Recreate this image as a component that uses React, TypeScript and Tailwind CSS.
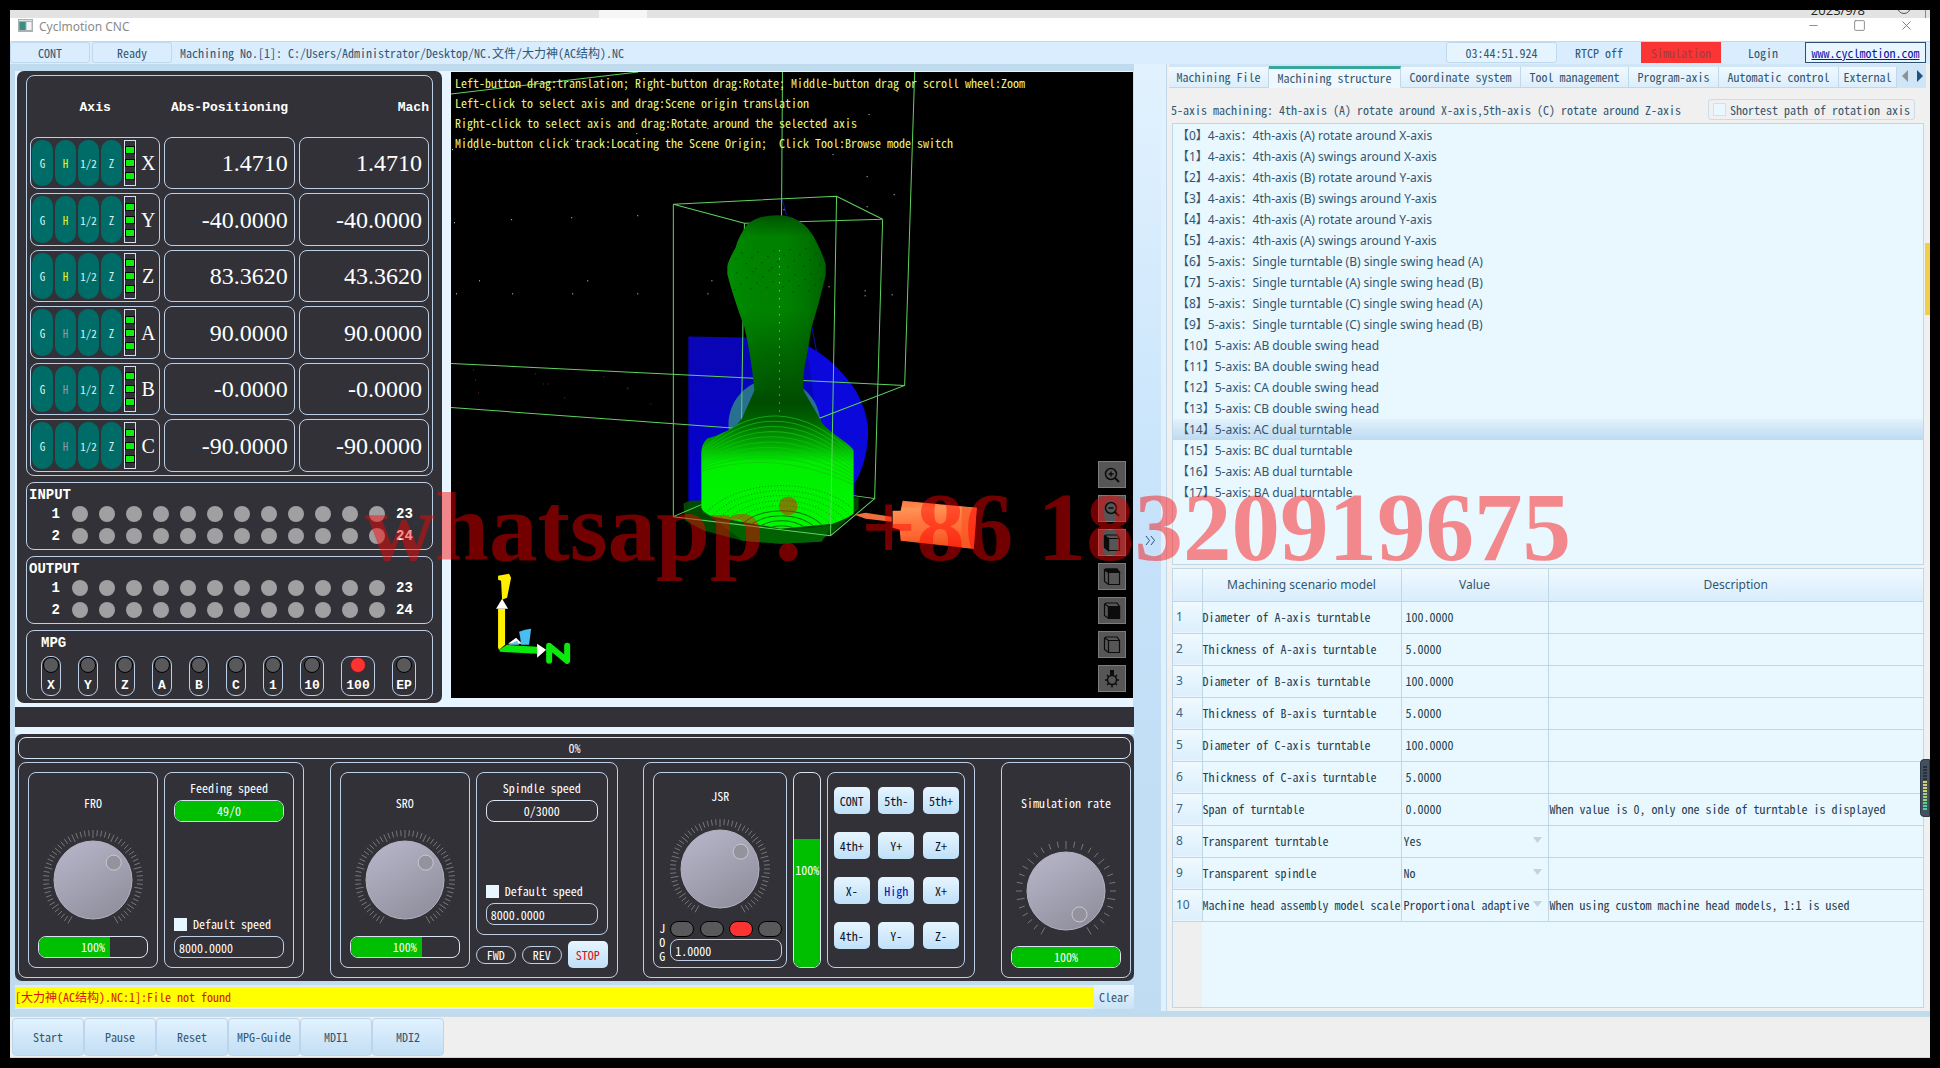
import React from "react";
import { Minus, Square, X } from "lucide-react";

const axes = [
  { name: "X", homed: true, abs: "1.4710", mach: "1.4710" },
  { name: "Y", homed: true, abs: "-40.0000", mach: "-40.0000" },
  { name: "Z", homed: true, abs: "83.3620", mach: "43.3620" },
  { name: "A", homed: false, abs: "90.0000", mach: "90.0000" },
  { name: "B", homed: false, abs: "-0.0000", mach: "-0.0000" },
  { name: "C", homed: false, abs: "-90.0000", mach: "-90.0000" },
];

const structures = [
  "【0】4-axis：4th-axis (A) rotate around X-axis",
  "【1】4-axis：4th-axis (A) swings around X-axis",
  "【2】4-axis：4th-axis (B) rotate around Y-axis",
  "【3】4-axis：4th-axis (B) swings around Y-axis",
  "【4】4-axis：4th-axis (A) rotate around Y-axis",
  "【5】4-axis：4th-axis (A) swings around Y-axis",
  "【6】5-axis：Single turntable (B) single swing head (A)",
  "【7】5-axis：Single turntable (A) single swing head (B)",
  "【8】5-axis：Single turntable (C) single swing head (A)",
  "【9】5-axis：Single turntable (C) single swing head (B)",
  "【10】5-axis: AB double swing head",
  "【11】5-axis: BA double swing head",
  "【12】5-axis: CA double swing head",
  "【13】5-axis: CB double swing head",
  "【14】5-axis: AC dual turntable",
  "【15】5-axis: BC dual turntable",
  "【16】5-axis: AB dual turntable",
  "【17】5-axis: BA dual turntable",
];

const scenario: { name: string; value: string; note?: string; select?: boolean }[] = [
  { name: "Diameter of A-axis turntable", value: "100.0000" },
  { name: "Thickness of A-axis turntable", value: "5.0000" },
  { name: "Diameter of B-axis turntable", value: "100.0000" },
  { name: "Thickness of B-axis turntable", value: "5.0000" },
  { name: "Diameter of C-axis turntable", value: "100.0000" },
  { name: "Thickness of C-axis turntable", value: "5.0000" },
  { name: "Span of turntable", value: "0.0000", note: "When value is 0, only one side of turntable is displayed" },
  { name: "Transparent turntable", value: "Yes", select: true },
  { name: "Transparent spindle", value: "No", select: true },
  { name: "Machine head assembly model scale", value: "Proportional adaptive", select: true, note: "When using custom machine head models, 1:1 is used" },
];

const frame = "rounded-[8px] border border-[#bccfe6]";

function AxisPanel() {
  return (
    <section className={`${frame} flex flex-col gap-1 px-[3px] pb-[3px]`}>
      <div className="grid h-[57px] grid-cols-3 items-end gap-1 pb-[17px] font-['Liberation_Mono',monospace] text-[13px] leading-4 font-bold text-white">
        <span className="text-center">Axis</span>
        <span className="text-center">Abs-Positioning</span>
        <span className="text-right">Mach</span>
      </div>
      {axes.map((a) => (
        <div key={a.name} className="grid h-[52px] grid-cols-3 gap-1 odd:h-[53px]">
          <div className={`${frame} flex items-stretch gap-0.5 px-px py-0.5`}>
            {["G", "H", "1/2", "Z"].map((k) => (
              <button
                key={k}
                className={`w-[21px] rounded-[10px] bg-[#006c67] text-center text-[11px] ${
                  k === "H" ? (a.homed ? "text-[#e6f21e]" : "text-[#8d9b9e]") : "text-[#d5f3f3]"
                }`}
              >
                {k}
              </button>
            ))}
            <div className="flex w-3 flex-col items-center justify-center gap-[5px] border border-[#d4e0ee]">
              <i className="h-2 w-2.5 border border-black bg-[#0df00d]" />
              <i className="h-2 w-2.5 border border-black bg-[#0df00d]" />
              <i className="h-2 w-2.5 border border-black bg-[#0df00d]" />
            </div>
            <span className="flex flex-1 items-center justify-center font-['Liberation_Serif',serif] text-[20px] text-white">{a.name}</span>
          </div>
          <output className={`${frame} flex items-center justify-end pr-1.5 font-['Liberation_Serif',serif] text-[24px] text-white`}>{a.abs}</output>
          <output className={`${frame} flex items-center justify-end pr-1.5 font-['Liberation_Serif',serif] text-[24px] text-white`}>{a.mach}</output>
        </div>
      ))}
    </section>
  );
}

function IoPanel({ title }: { title: string }) {
  return (
    <section className={`${frame} h-[68px] px-0.5 pt-1 font-['Liberation_Mono',monospace] text-[14px] font-bold text-white`}>
      <h2 className="leading-4">{title}</h2>
      {[
        ["1", "23"],
        ["2", "24"],
      ].map(([from, to]) => (
        <div key={from} className="flex h-[22px] items-center">
          <span className="w-[43px] pr-3 text-right">{from}</span>
          <div className="flex gap-[11px]">
            {Array.from({ length: 12 }, (_, i) => (
              <i key={i} className="size-4 rounded-full bg-[#a09fa2]" />
            ))}
          </div>
          <span className="pl-[11px]">{to}</span>
        </div>
      ))}
    </section>
  );
}

function MpgPanel() {
  return (
    <fieldset className={`${frame} h-[70px] px-3.5 pt-1 font-['Liberation_Mono',monospace] text-[13px] font-bold text-white`}>
      <h2 className="text-[14px] leading-4">MPG</h2>
      <div className="mt-[5px] flex gap-[17px]">
        {["X", "Y", "Z", "A", "B", "C", "1", "10", "100", "EP"].map((k) => (
          <label
            key={k}
            className={`flex h-10 flex-col items-center justify-between rounded-[9px] border border-[#bccfe6] leading-[18px] ${
              k === "100" ? "w-[34px]" : k.length === 2 ? "w-6" : "w-5"
            }`}
          >
            <input
              type="radio"
              name="mpg"
              defaultChecked={k === "100"}
              className="size-4 shrink-0 appearance-none rounded-full border border-black bg-[#59595b] checked:border-[#6b1d1d] checked:bg-[#fb3432]"
            />
            {k}
          </label>
        ))}
      </div>
    </fieldset>
  );
}

const viewTools = ["Zoom in", "Zoom out", "Side view", "Top view", "Front view", "Wire view", "Light"];

function ToolIcon({ name }: { name: string }) {
  if (name === "Zoom in" || name === "Zoom out")
    return (
      <svg width="16" height="16" viewBox="0 0 16 16" fill="none" stroke="currentColor">
        <circle cx="7" cy="7" r="5.500" strokeWidth="1.500" />
        <path d="M11 11l4 4" strokeWidth="2" />
        <path d={name === "Zoom in" ? "M4.500 7h5M7 4.500v5" : "M4.500 7h5"} strokeWidth="1.500" />
      </svg>
    );
  if (name === "Light")
    return (
      <svg width="18" height="18" viewBox="0 0 18 18" fill="none" stroke="currentColor">
        <circle cx="9" cy="10" r="4.500" strokeWidth="1.500" />
        <path d="M7 0h4v5H7z" fill="currentColor" stroke="none" />
        <path d="M9 15v2.500M2 10h2M14 10h2M4 5l1.500 1.500M14 5l-1.500 1.500M4 15l1.500-1.500M14 15l-1.500-1.500" strokeWidth="1.500" />
      </svg>
    );
  return (
    <svg width="18" height="18" viewBox="0 0 18 18" fill="none" stroke="currentColor" strokeWidth="1.200">
      <path d="M1.500 2.500L3 1h11l2.500 3.500v12h-11l-4-3z" />
      <path d="M1.500 2l4 2.500h11M5.500 4.500v12" />
      {name === "Side view" && <path d="M1.500 2l4 2.500v12l-4-3z" fill="currentColor" />}
      {name === "Top view" && <path d="M1.500 1.500L3 1h11l2.500 3.500h-11z" fill="currentColor" />}
      {name === "Front view" && <path d="M5.500 4.500h11v12h-11z" fill="currentColor" />}
    </svg>
  );
}

function Scene() {
  const stars = [
    [3, 150], [60, 147], [120, 145], [186, 143], [28, 208], [136, 208], [260, 208], [5, 221], [61, 221], [121, 221],
    [186, 221], [256, 221], [417, 42], [415, 104], [442, 122], [415, 134], [377, 214], [413, 218], [413, 223], [440, 222],
    [185, 61], [120, 67], [1, 77], [24, 77], [256, 56], [381, 82], [445, 19], [332, 137],
  ];
  const embers = [[22, 297], [84, 301], [152, 304], [24, 307], [96, 311], [176, 315], [27, 320], [92, 311], [176, 316], [113, 325], [199, 331]];
  return (
    <svg className="absolute inset-0 h-full w-full" viewBox="0 0 681 626" preserveAspectRatio="xMinYMin slice" aria-label="Machining scene">
      <defs>
        <linearGradient id="body" x1="0" y1="143" x2="0" y2="456" gradientUnits="userSpaceOnUse">
          <stop offset="0" stopColor="#005200" />
          <stop offset="0.070" stopColor="#008200" />
          <stop offset="0.300" stopColor="#008400" />
          <stop offset="0.420" stopColor="#006b00" />
          <stop offset="0.600" stopColor="#004c00" />
          <stop offset="0.660" stopColor="#006400" />
          <stop offset="0.740" stopColor="#00b400" />
          <stop offset="0.790" stopColor="#00f000" />
          <stop offset="1" stopColor="#00f600" />
        </linearGradient>
        <linearGradient id="shade" x1="276" x2="374" y1="0" y2="0" gradientUnits="userSpaceOnUse">
          <stop offset="0" stopColor="#00a000" stopOpacity="0.350" />
          <stop offset="0.500" stopColor="#007000" stopOpacity="0" />
          <stop offset="1" stopColor="#003800" stopOpacity="0.450" />
        </linearGradient>
        <linearGradient id="blue" x1="0" y1="264" x2="1" y2="425" gradientUnits="userSpaceOnUse">
          <stop offset="0" stopColor="#0a05b4" />
          <stop offset="1" stopColor="#0500d0" />
        </linearGradient>
        <linearGradient id="holder" x1="0" y1="0" x2="0.100" y2="1">
          <stop offset="0" stopColor="#ff7038" />
          <stop offset="0.200" stopColor="#ff9255" />
          <stop offset="0.450" stopColor="#ff7a40" />
          <stop offset="0.700" stopColor="#ff6a34" />
          <stop offset="1" stopColor="#f0501c" />
        </linearGradient>
        <clipPath id="stock">
          <path d="M303 318L291 345Q284 356 272 360Q264 364 256 366Q250 371 250 381V435Q252 441 262 444L329 456L381 451Q395 446 402 441V378Q400 374 390 367Q376 357 371 351L352 318Z" />
        </clipPath>
      </defs>

      <path d="M249 423L232 431L234 448L253 458L291 468L329 471L364 469L379 462L407 436V425Z" fill="#004a00" />
      <path d="M262 446L329 458L381 453L370 469L329 471L291 468Z" fill="#006200" />
      <path d="M237 264L293 265L351 271Q380 283 404 318Q419 345 416 368Q414 392 403 411V425L237 428Z" fill="url(#blue)" />
      <path d="M355 273Q384 288 404 318Q419 345 416 368Q414 392 403 411L370 380Z" fill="#0b08dc" />
      <circle cx="323" cy="352" r="46" fill="#27708f" />
      <path d="M331 128L335 143M360 253L365 279" stroke="#0c0cb0" fill="none" />

      <g stroke="#5fd35f" fill="none">
        <path d="M0 22L187 0M331 0L330 150M463 0L453 313L362 348" />
        <path d="M0 291L453 313M0 335L288 356" />
        <path d="M222 132L385 124L431 147L293 151ZM222 132V444M293 151L290 356" />
      </g>

      <path d="M326 143Q306 143 296 152Q287 164 284 176Q277 188 276 194V202Q281 222 293 255Q300 285 303 318L291 345Q284 356 272 360Q264 364 256 366Q250 371 250 381V435Q252 441 262 444L329 456L381 451Q395 446 402 441V378Q400 374 390 367Q376 357 371 351L352 318Q351 300 355 285L360 255L367 231L374 203V192Q371 182 366 172Q358 154 346 148Q338 143 326 143Z" fill="url(#body)" />
      <path d="M326 143Q306 143 296 152Q287 164 284 176Q277 188 276 194V202Q281 222 293 255Q300 285 303 318L352 318Q351 300 355 285L360 255L367 231L374 203V192Q371 182 366 172Q358 154 346 148Q338 143 326 143Z" fill="url(#shade)" />
      <g clipPath="url(#stock)" fill="none">
        {Array.from({ length: 10 }, (_, i) => (
          <path key={i} d={`M246 ${382 + i * 2}Q326 ${302 + i * 8} 408 ${388 + i * 3}`} stroke="#12c412" strokeWidth="1" opacity="0.700" />
        ))}
        {Array.from({ length: 10 }, (_, i) => (
          <ellipse
            key={i}
            cx="330"
            cy="466"
            rx={14 + i * 8}
            ry={8 + i * 5}
            stroke="#006a00"
            strokeWidth="1"
            strokeDasharray={i > 4 ? "1 2" : "none"}
            opacity={i > 4 ? "0.600" : "0.900"}
          />
        ))}
      </g>
      <path d="M328 178V345" stroke="#9be09b" strokeDasharray="1 7" />
      {Array.from({ length: 44 }, (_, i) => (
        <rect key={i} x={280 + ((i * 37) % 90)} y={175 + ((i * 23) % 45)} width="1" height="1" fill="#003200" />
      ))}

      <g stroke="#5fd35f" fill="none">
        <path d="M385 124L379 463M431 147L423 426M222 444L379 463L423 426L402 423M222 444L250 432" />
      </g>

      <path d="M403 442L414 440L440 444V449L414 446Z" fill="#f0703c" />
      <path d="M441 438H449L451 428L525 435L522 476L449 468L448 457L441 455Z" fill="url(#holder)" />
      <path d="M510 434L525 435L522 476L510 475Z" fill="#f85a26" opacity="0.700" />

      {stars.map(([x, y], i) => (
        <rect key={i} x={x} y={y} width="1" height="1" fill="#d8d8d8" />
      ))}
      {embers.map(([x, y], i) => (
        <rect key={i} x={x} y={y} width="1" height="1" fill="#8a2020" />
      ))}

      <path d="M47 536H54V572L48 577L47 575Z" fill="#fff200" />
      <path d="M51 526L57 536H45Z" fill="#fff" />
      <path d="M47 503L58 501L60 505L56 525L51 527L50 508L47 507Z" fill="#ffee00" />
      <path d="M48 577L56 572L86 574V581L49 579Z" fill="#0be80b" />
      <path d="M86 571L95 577L86 585Z" fill="#fff" />
      <path d="M98 588V573L116 588V573" stroke="#0be80b" strokeWidth="6" strokeLinecap="round" strokeLinejoin="round" fill="none" />
      <path d="M57 571L65 565L71 571Z" fill="#fff" />
      <path d="M68 559L74 557L80 556L78 572H70L69 564Z" fill="#47bdf2" />
      <path d="M57 572L66 568L68 572Z" fill="#6fc4ea" />
    </svg>
  );
}

function Viewport() {
  return (
    <div className="relative flex-1 overflow-hidden bg-black">
      <Scene />
      <div className="relative px-1 pt-px text-[12px] leading-5 whitespace-pre text-[#eef27c]">
        <p>Left-button drag:translation; Right-button drag:Rotate; Middle-button drag or scroll wheel:Zoom</p>
        <p>Left-click to select axis and drag:Scene origin translation</p>
        <p>Right-click to select axis and drag:Rotate around the selected axis</p>
        <p>Middle-button click track:Locating the Scene Origin;  Click Tool:Browse mode switch</p>
      </div>
      <div className="absolute right-[7px] bottom-1.5 flex flex-col gap-[7px]">
        {viewTools.map((t) => (
          <button key={t} aria-label={t} className="flex h-[27px] w-7 items-center justify-center border border-[#7c7c7c] bg-[#565656] text-[#0c0c0c]">
            <ToolIcon name={t} />
          </button>
        ))}
      </div>
    </div>
  );
}

function Dial({ label, angle, ticks }: { label: string; angle: number; ticks: number }) {
  const knobX = 52 + 27 * Math.sin((angle * Math.PI) / 180);
  const knobY = 52 - 27 * Math.cos((angle * Math.PI) / 180);
  return (
    <div className="relative mx-auto size-[104px]">
      <svg viewBox="0 0 104 104" className="size-full" aria-hidden="true">
        <defs>
          <linearGradient id={`dial-${label}`} x1="0" y1="0" x2="0.600" y2="1">
            <stop offset="0" stopColor="#b9b8cb" />
            <stop offset="0.550" stopColor="#a4a3b4" />
            <stop offset="1" stopColor="#92919f" />
          </linearGradient>
        </defs>
        {Array.from({ length: ticks + 1 }, (_, i) => {
          const a = ((-150 + (300 * i) / ticks) * Math.PI) / 180;
          const inner = i % 5 === 0 ? 42 : 44;
          return (
            <line
              key={i}
              x1={52 + inner * Math.sin(a)}
              y1={52 - inner * Math.cos(a)}
              x2={52 + 50 * Math.sin(a)}
              y2={52 - 50 * Math.cos(a)}
              stroke="#77777a"
              strokeWidth="1"
            />
          );
        })}
        <circle cx="52" cy="52" r="39" fill={`url(#dial-${label})`} stroke="#b4b3c0" strokeWidth="1" />
        <circle cx={knobX} cy={knobY} r="7.500" fill="#93929d" stroke="#c9c8d4" strokeWidth="1" />
      </svg>
      <input type="range" aria-label={label} className="absolute inset-0 size-full opacity-0" />
    </div>
  );
}

function Meter({ text, percent }: { text: string; percent: number }) {
  return (
    <div className="relative h-[22px] overflow-hidden rounded-[8px] border border-[#d9e4f2] leading-5 text-white">
      <div className="absolute inset-y-0 left-0 bg-[#00be00]" style={{ width: `${percent}%` }} />
      <span className="relative block text-center">{text}</span>
    </div>
  );
}

function NumberBox({ value, label }: { value: string; label: string }) {
  return <input aria-label={label} defaultValue={value} className="block h-[22px] w-full rounded-[8px] border border-[#bccfe6] bg-transparent px-1 text-white" />;
}

function DefaultSpeed() {
  return (
    <label className="mb-1 flex items-center gap-1.5">
      <input type="checkbox" className="size-[13px] appearance-none bg-[#e8f6ff]" />
      Default speed
    </label>
  );
}

const keyFace = "rounded-[5px] bg-linear-to-b from-[#e6f5ff] to-[#bfe0f8]";

function ControlPanel() {
  return (
    <section className="rounded-[7px] bg-[#323137] p-[3px] text-white">
      <div className="flex h-[22px] items-center justify-center rounded-[8px] border border-[#d9e4f2]" role="progressbar" aria-label="Program progress">
        0%
      </div>
      <div className="mt-[3px] flex h-[216px] justify-between">
        <div className={`${frame} flex w-[286px] gap-1.5 p-[9px]`}>
          <div className={`${frame} flex flex-1 flex-col px-[9px] pt-[22px] pb-[9px]`}>
            <h3 className="text-center leading-4">FRO</h3>
            <div className="mt-[17px]">
              <Dial label="FRO" angle={50} ticks={60} />
            </div>
            <div className="mt-auto">
              <Meter text="100%" percent={66} />
            </div>
          </div>
          <div className={`${frame} flex flex-1 flex-col px-[9px] pt-[7px] pb-[9px]`}>
            <h3 className="mb-1 text-center leading-4">Feeding speed</h3>
            <Meter text="49/0" percent={100} />
            <div className="mt-auto">
              <DefaultSpeed />
              <NumberBox value="8000.0000" label="Feeding speed value" />
            </div>
          </div>
        </div>

        <div className={`${frame} flex w-[288px] gap-1.5 p-[9px]`}>
          <div className={`${frame} flex w-[130px] flex-col px-[9px] pt-[22px] pb-[9px]`}>
            <h3 className="text-center leading-4">SRO</h3>
            <div className="mt-[17px]">
              <Dial label="SRO" angle={50} ticks={60} />
            </div>
            <div className="mt-auto">
              <Meter text="100%" percent={66} />
            </div>
          </div>
          <div className="flex flex-1 flex-col gap-1.5">
            <div className={`${frame} flex flex-1 flex-col px-[9px] pt-[7px] pb-[9px]`}>
              <h3 className="mb-1 text-center leading-4">Spindle speed</h3>
              <Meter text="0/3000" percent={0} />
              <div className="mt-auto">
                <DefaultSpeed />
                <NumberBox value="8000.0000" label="Spindle speed value" />
              </div>
            </div>
            <div className="flex items-center justify-between">
              <button className="h-[18px] w-10 rounded-full border border-[#bccfe6] leading-none">FWD</button>
              <button className="h-[18px] w-10 rounded-full border border-[#bccfe6] leading-none">REV</button>
              <button className={`${keyFace} h-[27px] w-10 text-[#e01010]`}>STOP</button>
            </div>
          </div>
        </div>

        <div className={`${frame} flex w-[332px] gap-1.5 p-[9px]`}>
          <div className={`${frame} flex w-[134px] flex-col px-1 pt-[15px] pb-1`}>
            <h3 className="text-center leading-4">JSR</h3>
            <div className="mt-[13px]">
              <Dial label="JSR" angle={50} ticks={60} />
            </div>
            <div className="mt-auto flex gap-1">
              <div className="flex w-2 flex-col items-center leading-[14px]">
                <span>J</span>
                <span>O</span>
                <span>G</span>
              </div>
              <div className="flex flex-1 flex-col gap-0.5">
                <div className="flex justify-between">
                  {[1, 2, 3, 4].map((n) => (
                    <input
                      key={n}
                      type="radio"
                      name="jog"
                      aria-label={`Jog step ${n}`}
                      defaultChecked={n === 3}
                      className="h-4 w-6 appearance-none rounded-full border border-black bg-[#59595b] checked:bg-[#fb3432]"
                    />
                  ))}
                </div>
                <NumberBox value="1.0000" label="Jog distance" />
              </div>
            </div>
          </div>
          <div className="relative flex w-7 items-center justify-center overflow-hidden rounded-[8px] border border-[#d9e4f2]">
            <div className="absolute inset-x-0 bottom-0 h-[66%] bg-[#00be00]" />
            <span className="relative">100%</span>
          </div>
          <div className={`${frame} grid flex-1 grid-cols-3 content-start justify-items-center gap-y-[18px] px-px pt-3.5 text-[#0c1226]`}>
            {["CONT", "5th-", "5th+", "4th+", "Y+", "Z+", "X-", "High", "X+", "4th-", "Y-", "Z-"].map((k) => (
              <button key={k} className={`${keyFace} h-[27px] w-9 ${k === "High" ? "text-[#0a10c0]" : ""}`}>
                {k}
              </button>
            ))}
          </div>
        </div>

        <div className={`${frame} flex w-[130px] flex-col px-[9px] pt-8 pb-[9px]`}>
          <h3 className="text-center leading-4">Simulation rate</h3>
          <div className="mt-7">
            <Dial label="Simulation" angle={150} ticks={30} />
          </div>
          <div className="mt-auto">
            <Meter text="100%" percent={100} />
          </div>
        </div>
      </div>
    </section>
  );
}

const tabs = [
  { name: "Machining File", w: "w-[100px]" },
  { name: "Machining structure", w: "w-[132px]" },
  { name: "Coordinate system", w: "w-[120px]" },
  { name: "Tool management", w: "w-[108px]" },
  { name: "Program-axis", w: "w-[90px]" },
  { name: "Automatic control", w: "w-[120px]" },
  { name: "External", w: "w-[58px]" },
];

function RightPanel() {
  return (
    <section className="relative flex min-w-0 flex-col border-l border-[#c0d8ea] bg-[#f0f0f0] pr-1 pl-[2px]">
      <nav className="flex h-6 items-end overflow-hidden bg-[#d0e6f7]">
        {tabs.map((t) => (
          <button
            key={t.name}
            className={`shrink-0 border-r border-b border-[#c0d8ea] whitespace-nowrap ${t.w} ${
              t.name === "Machining structure" ? "h-[22px] border-t-[3px] border-t-[#35a79c] border-b-transparent bg-[#eef8ff]" : "h-[21px] bg-linear-to-b from-[#f0f9ff] to-[#dceefb]"
            }`}
          >
            {t.name}
          </button>
        ))}
        <button aria-label="Previous tabs" className="flex h-full w-4 shrink-0 items-center justify-center text-[#8c9396]">
          <svg width="6" height="12" viewBox="0 0 6 12" fill="currentColor"><path d="M6 0v12L0 6z" /></svg>
        </button>
        <button aria-label="Next tabs" className="flex h-full w-3.5 shrink-0 items-center justify-center text-[#1d5483]">
          <svg width="6" height="12" viewBox="0 0 6 12" fill="currentColor"><path d="M0 0v12l6-6z" /></svg>
        </button>
      </nav>

      <div className="flex h-[35px] items-center justify-between pt-2 pr-[11px] pl-0.5">
        <span className="whitespace-pre">5-axis machining: 4th-axis (A) rotate around X-axis,5th-axis (C) rotate around Z-axis</span>
        <label className="flex h-[21px] items-center gap-1 rounded-[3px] border border-[#cbdde9] px-1">
          <input type="checkbox" className="size-[13px] appearance-none border border-[#cfe2ef] bg-[#e9f7ff]" />
          Shortest path of rotation axis
        </label>
      </div>

      <ul className="mr-0.5 ml-[3px] h-[442px] border border-[#c0d8e6] bg-[#e9f7ff] py-px font-['Noto_Sans','Noto_Sans_CJK_SC',sans-serif] text-[12px]">
        {structures.map((s, i) => (
          <li key={s} className={`h-[21px] px-1 leading-[21px] ${i === 14 ? "bg-linear-to-b from-[#e2f1fd] to-[#bddaf0]" : ""}`}>
            {s}
          </li>
        ))}
      </ul>

      <div className="mt-[3px] mr-0.5 mb-[3px] ml-[3px] flex flex-1 flex-col border border-[#c0d8e6] bg-[#e9f7ff]">
        <table className="w-full table-fixed border-collapse">
          <colgroup>
            <col className="w-[29px]" />
            <col className="w-[199px]" />
            <col className="w-[147px]" />
            <col />
          </colgroup>
          <thead>
            <tr className="h-8 bg-linear-to-b from-[#eff9ff] to-[#d9edfc] font-['Noto_Sans',sans-serif] text-[12px]">
              <th className="border-r border-b border-[#c0d8e6]" aria-label="Row" />
              <th className="border-r border-b border-[#c0d8e6] font-normal">Machining scenario model</th>
              <th className="border-r border-b border-[#c0d8e6] font-normal">Value</th>
              <th className="border-b border-[#c0d8e6] font-normal">Description</th>
            </tr>
          </thead>
          <tbody className="text-[#24404f]">
            {scenario.map((r, i) => (
              <tr key={r.name} className="h-8">
                <th className="border-r border-b border-[#c0d8e6] bg-linear-to-b from-[#f0f9ff] to-[#dceffc] pl-[3px] text-left font-['Noto_Sans',sans-serif] text-[12px] font-normal text-[#3a6080]">
                  {i + 1}
                </th>
                <td className="border-r border-b border-[#c0d8e6] p-0 whitespace-nowrap">{r.name}</td>
                <td className="border-r border-b border-[#c0d8e6] p-0">
                  {r.select ? (
                    <span className="relative block">
                      <select aria-label={r.name} className="block w-full appearance-none bg-transparent pl-0.5">
                        <option>{r.value}</option>
                      </select>
                      <svg className="pointer-events-none absolute top-1 right-1.5" width="9" height="6" viewBox="0 0 9 6" fill="#c3d2dc"><path d="M0 0h9L4.500 6z" /></svg>
                    </span>
                  ) : (
                    <input aria-label={r.name} defaultValue={r.value} className="block w-full bg-transparent pl-1" />
                  )}
                </td>
                <td className="border-b border-[#c0d8e6] p-0 pl-px whitespace-nowrap">{r.note}</td>
              </tr>
            ))}
          </tbody>
        </table>
        <div className="w-[29px] flex-1 bg-[#efefef]" />
      </div>

      <i className="absolute top-[179px] right-0 h-[72px] w-[5px] bg-[#f2cd4a]" />
      <div className="absolute top-[695px] right-0 flex h-[58px] w-2.5 flex-col items-end justify-center gap-px rounded-l-[4px] border border-[#2d3a48] bg-[#44505e] pr-0.5">
        {Array.from({ length: 15 }, (_, i) => (
          <i key={i} className={`h-0.5 w-1 shrink-0 ${i < 5 ? "bg-[#27313c]" : i < 9 ? "bg-[#d3cf72]" : i < 12 ? "bg-[#9fd06b]" : "bg-[#50cfa4]"}`} />
        ))}
      </div>
    </section>
  );
}

export default function App() {
  return (
    <main className="flex min-h-screen w-full flex-col bg-black p-2.5 font-['Noto_Sans_Mono_CJK_SC','Noto_Sans_CJK_SC',monospace] text-[12px] leading-4 text-[#33566f]">
      <div className="relative flex flex-1 flex-col bg-[#c0daee]">
        <div className="flex h-2 items-end justify-end overflow-hidden bg-[#e3e3e3] font-['Open_Sans',sans-serif] text-[13px] leading-4 text-[#222]">
          <i className="mr-auto ml-[589px] h-full w-12 bg-[#f6f6f6]" />
          <span className="mr-8">2023/9/8</span>
          <i className="mb-1 mr-3.5 size-3.5 shrink-0 rounded-full border border-[#555]" />
          <i className="mr-1 h-full w-px bg-[#888]" />
        </div>

        <header className="flex h-[23px] items-center bg-white pl-2 font-['Noto_Sans',sans-serif] text-[12px] text-[#8b8b8b]">
          <svg width="15" height="13" viewBox="0 0 15 13" className="mr-1.5 mb-2">
            <path d="M0 0h15v13H0z" fill="#a9b0b2" />
            <path d="M1 1h13v1H1z" fill="#dfe4e5" />
            <path d="M1.500 3h6v8h-6z" fill="#3f8d82" />
            <path d="M8.500 3h5v8h-5z" fill="#f2f6f6" />
          </svg>
          <span className="mb-1.5">Cyclmotion CNC</span>
          <div className="mr-4 mb-2 ml-auto flex gap-[33px] text-[#777]">
            <button aria-label="Minimize"><Minus size={13} strokeWidth={1.5} /></button>
            <button aria-label="Maximize"><Square size={13} strokeWidth={1.5} /></button>
            <button aria-label="Close"><X size={15} strokeWidth={1.5} /></button>
          </div>
        </header>

        <div className="flex h-[23px] items-stretch gap-0.5 border-t border-[#c3d9e6] bg-[#d9edff] pr-1 pb-px">
          <button className="w-20 rounded-[3px] border border-[#bfd9ee] bg-[#d9edff]">CONT</button>
          <button className="w-20 rounded-[3px] border border-[#bfd9ee] bg-[#d9edff]">Ready</button>
          <span className="flex items-center pl-1.5 whitespace-nowrap">Machining No.[1]: C:/Users/Administrator/Desktop/NC.文件/大力神(AC结构).NC</span>
          <span className="ml-auto flex w-[111px] items-center justify-center rounded-[3px] border border-[#bfd9ee] bg-[#e6f4ff]">03:44:51.924</span>
          <button className="w-20">RTCP off</button>
          <button className="w-20 bg-[#fb3434] text-[#a03c48]">Simulation</button>
          <button className="w-20">Login</button>
          <a href="http://www.cyclmotion.com" className="flex w-[121px] items-center justify-center border border-[#2d4f74] bg-[#eaf6ff] text-[#0a14a8] underline">
            www.cyclmotion.com
          </a>
        </div>

        <div className="grid flex-1 grid-cols-[minmax(0,1124fr)_32px_minmax(0,764fr)] pb-[5px]">
          <div className="flex flex-col pt-[7px] pl-[5px]">
            <div className="flex h-[636px] bg-[#e6f5ff]">
              <div className="flex w-[427px] shrink-0 flex-col bg-[#e6f5ff] pb-1 pl-0.5">
                <div className="flex flex-1 flex-col gap-1.5 rounded-[7px] bg-[#323137] px-[9px] pt-1 pb-[3px]">
                  <AxisPanel />
                  <IoPanel title="INPUT" />
                  <IoPanel title="OUTPUT" />
                  <MpgPanel />
                </div>
              </div>
              <div className="flex flex-1 border-r border-[#c8e0ee] pt-px pb-[9px] pl-[9px]">
                <Viewport />
              </div>
            </div>
            <div className="h-5 bg-[#323137]" />
            <div className="h-[7px] bg-[#e6f5ff]" />
            <ControlPanel />
            <div className="mt-1 flex h-6 items-stretch">
              <p className="flex flex-1 items-center border-y-2 border-[#e0ecf4] bg-[#ffff00] text-[#d31414]">[大力神(AC结构).NC:1]:File not found</p>
              <button className="w-10 bg-linear-to-b from-[#e8f5ff] to-[#c8e2f6]">Clear</button>
            </div>
          </div>

          <div className="flex items-center border-r-[5px] border-[#e2f1fc] bg-linear-to-b from-[#e2f2fe] via-[#c5e2fa] to-[#bfdcf2] pl-[11px]">
            <button aria-label="Collapse panel" className="mt-1.5">
              <svg width="11" height="9" viewBox="0 0 11 9" fill="none" stroke="#2a4f86" strokeWidth="1"><path d="M1 0l3.500 4.500L1 9M6 0l3.500 4.500L6 9" /></svg>
            </button>
          </div>

          <RightPanel />
        </div>

        <footer className="flex h-[42px] border-y border-[#c9dbe6] bg-[#efefef] p-px pl-0.5">
          {["Start", "Pause", "Reset", "MPG-Guide", "MDI1", "MDI2"].map((b) => (
            <button key={b} className="w-[72px] rounded-[4px] border border-[#bcd5ea] bg-linear-to-b from-[#e2f2ff] to-[#c2def4]">
              {b}
            </button>
          ))}
        </footer>

        <p className="pointer-events-none absolute top-[462px] left-[355px] font-['Liberation_Serif','Noto_Sans_CJK_SC',serif] text-[97px] leading-[112px] font-bold whitespace-nowrap text-[#ff0000]/45">
          whatsapp：+86 18320919675
        </p>
      </div>
    </main>
  );
}
